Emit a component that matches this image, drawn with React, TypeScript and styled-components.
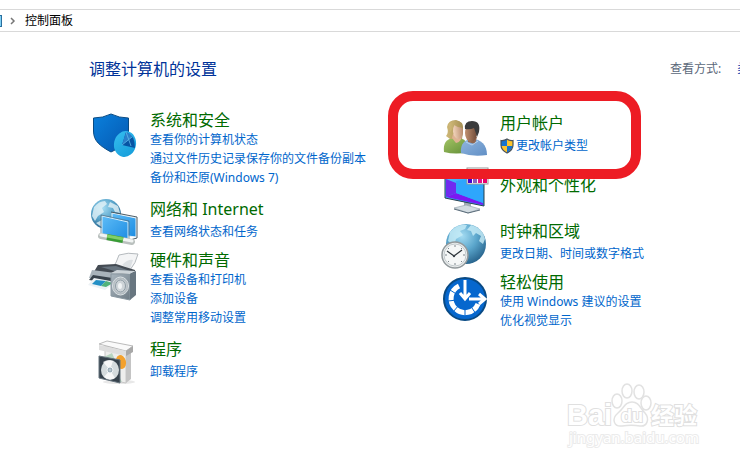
import React from "react";
import styled, { createGlobalStyle } from "styled-components";

const GlobalStyle = createGlobalStyle`
  * { box-sizing: border-box; }
  body {
    margin: 0;
    background: #fff;
    font-family: "Noto Sans", "Noto Sans CJK SC", sans-serif;
    font-size: 12px;
    overflow: hidden;
  }
`;

const Page = styled.div`
  position: relative;
  min-height: 100vh;
  padding-top: 9px;
  overflow: hidden;
`;

const AddressBar = styled.nav`
  display: flex;
  align-items: center;
  height: 23px;
  border-top: 1px solid #d9d9d9;
  border-bottom: 1px solid #d9d9d9;
`;

const LocationEdge = styled.span`
  width: 2px;
  height: 12px;
  background: #7fd0f5;
  border: solid #2a6f9e;
  border-width: 1px 1px 1px 0;
`;

const Chevron = styled.svg`
  width: 6px;
  height: 8px;
  margin: 0 9px 0 8px;
`;

const Crumb = styled.a`
  color: #000;
  line-height: 20px;
  text-decoration: none;
`;

const Header = styled.header`
  display: flex;
  align-items: center;
  justify-content: space-between;
  padding-left: 89px;
  margin-top: 24px;
  height: 26px;
`;

const Heading = styled.h1`
  margin: 0;
  font-size: 16px;
  font-weight: 400;
  line-height: 26px;
  color: #003399;
`;

const ViewMode = styled.div`
  display: flex;
  flex: 0 0 70px;
  gap: 16px;
  overflow: hidden;
  white-space: nowrap;
  line-height: 20px;
  color: #5a6779;
`;

const ViewButton = styled.button`
  flex: none;
  padding: 0;
  border: 0;
  background: none;
  font: inherit;
  color: #0033aa;
`;

const Categories = styled.main`
  display: grid;
  grid-template-columns: 7fr 6fr;
  align-items: start;
  margin-top: 28px;
  padding: 0 2px 0 88px;
`;

const Column = styled.div<{ $top?: number }>`
  padding-top: ${(p) => p.$top ?? 0}px;
`;

const Entry = styled.section<{ $single?: boolean; $featured?: boolean }>`
  position: relative;
  display: grid;
  grid-template-columns: 50px 1fr;
  column-gap: 12px;
  min-height: 46px;
  padding-bottom: ${(p) => (p.$single ? 9 : 12)}px;
  margin-bottom: ${(p) => (p.$featured ? 11 : 0)}px;
`;

const Icon = styled.svg`
  width: 50px;
  height: 50px;
  margin-bottom: -24px;
  overflow: visible;
`;

const Title = styled.a`
  display: block;
  font-size: 16px;
  line-height: 20px;
  color: #006a00;
  text-decoration: none;
  white-space: nowrap;
`;

const Links = styled.ul<{ $single?: boolean }>`
  list-style: none;
  margin: ${(p) => (p.$single ? 3 : 0)}px 0 0;
  padding: 0;
`;

const LinkRow = styled.li`
  display: flex;
  align-items: center;
  gap: 2px;
  height: 19px;
`;

const TaskLink = styled.a`
  line-height: 19px;
  color: #0066cc;
  text-decoration: none;
  white-space: nowrap;
`;

const ShieldSvg = styled.svg`
  width: 14px;
  height: 16px;
`;

const Highlight = styled.div`
  position: absolute;
  z-index: 2;
  left: -50px;
  top: -22px;
  width: 253px;
  height: 88px;
  border: 10px solid #ed1c24;
  border-radius: 25px;
  pointer-events: none;
`;

const Watermark = styled.svg`
  position: absolute;
  right: 38px;
  bottom: 12px;
  width: 138px;
  height: 70px;
  pointer-events: none;
`;

const SecurityIcon = () => (
  <Icon viewBox="0 0 50 50" aria-hidden="true">
    <defs>
      <linearGradient id="shield" x1="0" y1="0" x2="1" y2="1">
        <stop offset="0" stopColor="#0a80dc" />
        <stop offset="1" stopColor="#0557b0" />
      </linearGradient>
      <linearGradient id="pie" x1="0" y1="0" x2="1" y2="1">
        <stop offset="0" stopColor="#36bdf0" />
        <stop offset="1" stopColor="#139bd8" />
      </linearGradient>
    </defs>
    <path d="M5.500 8 Q15 8 23 4 Q31 8 40.500 8 V23 C40.500 31 34 37 23 42 C12 36 5.500 31 5.500 21Z" fill="url(#shield)" stroke="#084a83" />
    <ellipse cx="37" cy="34" rx="11" ry="13" transform="rotate(12 37 34)" fill="url(#pie)" />
    <path d="M34 35 L38 22 Q47 25 47 38Z" fill="#0754a4" />
    <path d="M34 35 L38 22 Q42 23 44 27Z" fill="#2b7fcb" />
    <path d="M38 22 L43 36 M34 35 L44 27" stroke="#5ebae8" strokeWidth=".8" />
  </Icon>
);

const GlobeDefs = ({ id }: { id: string }) => (
  <defs>
    <radialGradient id={id} cx="40%" cy="30%" r="75%">
      <stop offset="0" stopColor="#a5dcf2" />
      <stop offset=".5" stopColor="#5ba6cc" />
      <stop offset="1" stopColor="#245f88" />
    </radialGradient>
  </defs>
);

const NetworkIcon = () => (
  <Icon viewBox="0 0 50 50" aria-hidden="true">
    <GlobeDefs id="globeA" />
    <defs>
      <linearGradient id="screen" x1="0" y1="0" x2="1" y2="1">
        <stop offset="0" stopColor="#5ebcf7" />
        <stop offset="1" stopColor="#1c8ce2" />
      </linearGradient>
    </defs>
    <circle cx="18" cy="15" r="15" fill="url(#globeA)" />
    <path d="M6 8 Q11 2 17 2 L19 5 L14 9 L16 13 L10 17 L7 22 L4 17Z M22 3 L30 7 L32 14 L27 13 L25 9 L20 8Z M8 24 L14 21 L17 26 L15 29Z" fill="#e3f3f8" opacity=".8" />
    <path d="M24 14 L48 19 V38 L24 35Z" fill="url(#screen)" stroke="#e9f2f7" />
    <path d="M23 13 L49 18 V39 L42 41" fill="none" stroke="#4b5b65" />
    <path d="M14 17 L40 23 V42 L14 36Z" fill="url(#screen)" stroke="#d6effc" />
    <path d="M13 16 L41 22 V43 L13 37Z" fill="none" stroke="#526d80" strokeWidth=".7" />
    <path d="M13 37 L44 43" stroke="#bac0be" strokeWidth="6" strokeLinecap="round" />
    <path d="M13 36 L44 42" stroke="#f1f4f3" strokeWidth="3" strokeLinecap="round" />
    <path d="M19 38 L35 41" stroke="#389d35" strokeWidth="6" />
    <path d="M19 37 L35 40" stroke="#82cf68" strokeWidth="3" />
  </Icon>
);

const HardwareIcon = () => (
  <Icon viewBox="0 0 50 50" aria-hidden="true">
    <defs>
      <linearGradient id="metal" x1="0" y1="0" x2="1" y2="1">
        <stop offset="0" stopColor="#a9b5be" />
        <stop offset="1" stopColor="#6e7b85" />
      </linearGradient>
      <radialGradient id="cone">
        <stop offset="0" stopColor="#87919a" />
        <stop offset=".45" stopColor="#e3e6e8" />
        <stop offset="1" stopColor="#a3adb4" />
      </radialGradient>
    </defs>
    <path d="M31 5 Q40 2 50 4 Q48 13 42 20 L24 19 Q29 12 31 5Z" fill="#f4f5f6" stroke="#b5babe" />
    <path d="M34 15 Q40 9 45 10 L42 19Z" fill="#dce0e3" />
    <path d="M10 15 L28 14 L47 20 L48 27 L33 30 L4 25Z" fill="#444b53" />
    <path d="M13 17 L28 16 L42 21 L33 23Z" fill="#697580" />
    <path d="M4 20 L35 24 L32 33 L1 28Z" fill="#a9b3ba" />
    <path d="M5 25 L31 29 L27 34 L1 30Z" fill="#39434c" />
    <path d="M6 28 L28 32 L17 40 L0 35Z" fill="#edf2f5" />
    <path d="M8 30 L18 31 L13 36 L4 34Z" fill="#238fc5" />
    <path d="M18 31 L25 33 L18 37 L13 36Z" fill="#51b27a" />
    <path d="M23 24 L42 24 V50 L23 46Z" fill="url(#metal)" stroke="#8997a1" />
    <path d="M23 23 L29 20 L48 21 L42 24Z" fill="#ccd3d8" />
    <path d="M42 24 L48 21 V45 L42 50Z" fill="#687680" />
    <ellipse cx="32.500" cy="36" rx="8" ry="9" fill="url(#cone)" stroke="#dce2e5" />
    <ellipse cx="32.500" cy="36" rx="5" ry="6" fill="#ced4d8" stroke="#8e9ca5" />
    <ellipse cx="32" cy="36" rx="2" ry="3" fill="#f1f4f5" />
  </Icon>
);

const ProgramsIcon = () => (
  <Icon viewBox="0 0 50 50" aria-hidden="true">
    <ellipse cx="31" cy="43" rx="16" ry="2" fill="#e8e8e8" />
    <path d="M17 7 L38 11 V44 L17 40Z" fill="#eeeeed" stroke="#c8c8c8" />
    <path d="M38 11 L43 8 V40 L38 44Z" fill="#c4c4c4" />
    <path d="M11 5 L19 2 L45 7 L38 12Z" fill="#fafafa" stroke="#bbb" />
    <path d="M11 6 L38 12 V17 L11 11Z" fill="#dedede" />
    <path d="M38 12 L45 7 V13 L38 17Z" fill="#a8a8a8" />
    <path d="M16 18 L24 14 L28 23 L18 25Z M29 33 L34 43 L24 41Z" fill="#b8d5c1" />
    <ellipse cx="33" cy="23" rx="5" ry="7" transform="rotate(-15 33 23)" fill="#f3a12d" />
    <path d="M11 17 L32 21 V44 L11 39Z" fill="#36424c" stroke="#66747e" />
    <ellipse cx="22" cy="31" rx="9" ry="10" fill="#d4dbdd" />
    <path d="M22 31 L15 23 Q19 20 25 22Z M22 31 L27 39 Q21 42 16 38Z" fill="#fff" opacity=".8" />
    <ellipse cx="22" cy="31" rx="3" ry="3" fill="#9eb0ba" stroke="#f1f5f7" />
    <circle cx="22" cy="31" r="1" fill="#c4d0d6" />
  </Icon>
);

const UsersIcon = () => (
  <Icon viewBox="0 0 50 50" aria-hidden="true">
    <defs>
      <linearGradient id="green" x2="1" y2="1">
        <stop stopColor="#a4c565" />
        <stop offset="1" stopColor="#608c35" />
      </linearGradient>
      <linearGradient id="blue" x2="1" y2="1">
        <stop stopColor="#91b6df" />
        <stop offset="1" stopColor="#618fc5" />
      </linearGradient>
      <linearGradient id="hair">
        <stop stopColor="#d0b978" />
        <stop offset="1" stopColor="#a58f54" />
      </linearGradient>
      <linearGradient id="faceA">
        <stop stopColor="#f3d6bd" />
        <stop offset="1" stopColor="#ba8d70" />
      </linearGradient>
      <linearGradient id="faceB">
        <stop stopColor="#c19170" />
        <stop offset="1" stopColor="#704b39" />
      </linearGradient>
    </defs>
    <path d="M6 39 C5 30 8 26 16 25 C26 24 31 29 31 39 Q18 42 6 39Z" fill="url(#green)" />
    <path d="M12 26 L8 23 Q11 20 9 14 Q10 7 18 7 Q26 8 25 19 L24 26Z" fill="url(#hair)" />
    <path d="M15 21 L24 23 Q23 29 18 30 L14 25Z" fill="#dfb393" />
    <ellipse cx="20" cy="18" rx="5" ry="8" transform="rotate(-5 20 18)" fill="url(#faceA)" />
    <path d="M12 19 Q15 16 16 12 Q20 15 25 15 L24 10 Q16 5 11 11Z" fill="url(#hair)" />
    <path d="M23 40 C22 31 27 26 34 26 C43 26 49 32 49 42 Q34 44 23 40Z" fill="url(#blue)" />
    <path d="M30 23 L39 24 L37 31 L30 29Z" fill="#91664e" />
    <ellipse cx="33" cy="20" rx="6" ry="9" fill="url(#faceB)" />
    <path d="M27 16 Q26 8 34 8 Q43 8 41 19 L39 24 Q38 20 36 15 Q32 17 27 16Z" fill="#3b3b3c" />
    <path d="M28 29 L34 32 L40 28" fill="none" stroke="#b9d3ee" />
  </Icon>
);

const AppearanceIcon = () => (
  <Icon viewBox="0 0 50 50" aria-hidden="true">
    <defs>
      <linearGradient id="monitor" x2="1" y2="1">
        <stop stopColor="#50bbff" />
        <stop offset="1" stopColor="#1698f0" />
      </linearGradient>
    </defs>
    <path d="M26 27 H33 V34 H26Z" fill="#a2adb5" />
    <path d="M16 33 L28 30 L42 34 L30 38Z" fill="#d3dce2" stroke="#9ba7b1" strokeWidth=".7" />
    <path d="M16 34 L30 38 L42 35" fill="none" stroke="#596b79" />
    <path d="M7 -1 L46 2 V31 L7 23Z" fill="url(#monitor)" stroke="#2a4251" />
    <path d="M8 4 L18 8 V18 L8 22Z" fill="#702bf0" />
    <path d="M8 22 L18 18 L45 28 V30Z" fill="#7b18f1" />
    <path d="M18 6 V18 L45 28 V2Z" fill="#2ea6fc" />
    <rect x="29" y="-7" width="21" height="16" fill="#fff" stroke="#989898" />
    <path d="M30 -2 H34 V8 H30Z" fill="#4a00d0" />
    <path d="M35 -2 H39 V8 H35Z" fill="#8c60bd" />
    <path d="M40 -2 H44 V8 H40Z" fill="#e31189" />
    <path d="M45 -2 H49 V8 H45Z" fill="#eb006b" />
  </Icon>
);

const ClockIcon = () => (
  <Icon viewBox="0 0 50 50" aria-hidden="true">
    <GlobeDefs id="globeB" />
    <circle cx="28" cy="23" r="20" fill="url(#globeB)" />
    <path d="M12 11 Q20 2 29 4 L27 8 L22 10 L25 14 L18 18 L16 25 L10 20Z M33 4 Q45 7 47 18 L45 23 L41 20 L43 15 L38 12 L35 15 L33 10 L29 9Z" fill="#c9edf7" opacity=".8" />
    <circle cx="17" cy="34" r="13" fill="#edf0f0" stroke="#92999c" strokeWidth="1.500" />
    <circle cx="17" cy="34" r="11" fill="#f5f7f7" stroke="#c2c9cc" />
    <path d="M17 24 V26 M17 42 V44 M7 34 H9 M25 34 H27 M10 27 L11 28 M23 40 L24 41 M24 27 L23 28 M11 40 L10 41" stroke="#7c868c" />
    <path d="M9 30 L16 35 L24 29" fill="none" stroke="#2c3338" strokeWidth="1.200" />
    <circle cx="16" cy="35" r="1.200" fill="#384047" />
  </Icon>
);

const EaseIcon = () => (
  <Icon viewBox="0 0 50 50" aria-hidden="true">
    <circle cx="27" cy="27" r="21" fill="#0667ce" stroke="#094a84" strokeWidth="2" />
    <path d="M21 14 A14 14 0 1 0 40 32" fill="none" stroke="#fff" strokeWidth="5" />
    <path d="M12 18 L20 23 M10 29 L19 28 M15 40 L21 33 M27 35 V45 M32 33 L38 42" stroke="#0667ce" strokeWidth="1" />
    <path d="M27 27 V9" stroke="#0667ce" strokeWidth="7" />
    <path d="M27 8 V26 M22 21 L27 27 L32 21" fill="none" stroke="#fff" strokeWidth="3" />
    <path d="M31 27 H46 M41 22 L47 27 L41 32" fill="none" stroke="#fff" strokeWidth="3" />
  </Icon>
);

const AdminShield = () => (
  <ShieldSvg viewBox="0 0 14 16" aria-hidden="true">
    <path d="M1 2 Q4 3 7 1 V8 H1Z" fill="#1674cf" />
    <path d="M7 1 Q10 3 13 2 V8 H7Z" fill="#ffc42b" />
    <path d="M1 8 H7 V15 Q2 12 1 8Z" fill="#ffc42b" />
    <path d="M7 8 H13 Q12 12 7 15Z" fill="#1674cf" />
    <path d="M1 2.500 Q4 3 7 1 Q10 3 13 2.500 V7 Q13 12 7 15 Q1 12 1 7Z" fill="none" stroke="#47515a" strokeWidth="1.200" />
  </ShieldSvg>
);

type Item = {
  title: string;
  icon: React.ReactNode;
  links: string[];
  admin?: boolean;
};

const left: Item[] = [
  { title: "系统和安全", icon: <SecurityIcon />, links: ["查看你的计算机状态", "通过文件历史记录保存你的文件备份副本", "备份和还原(Windows 7)"] },
  { title: "网络和 Internet", icon: <NetworkIcon />, links: ["查看网络状态和任务"] },
  { title: "硬件和声音", icon: <HardwareIcon />, links: ["查看设备和打印机", "添加设备", "调整常用移动设置"] },
  { title: "程序", icon: <ProgramsIcon />, links: ["卸载程序"] },
];

const right: Item[] = [
  { title: "用户帐户", icon: <UsersIcon />, links: ["更改帐户类型"], admin: true },
  { title: "外观和个性化", icon: <AppearanceIcon />, links: [] },
  { title: "时钟和区域", icon: <ClockIcon />, links: ["更改日期、时间或数字格式"] },
  { title: "轻松使用", icon: <EaseIcon />, links: ["使用 Windows 建议的设置", "优化视觉显示"] },
];

const Category = ({ item }: { item: Item }) => {
  const single = item.links.length === 1;
  return (
    <Entry $single={single} $featured={item.admin}>
      {item.icon}
      <div>
        <Title href="#">{item.title}</Title>
        {item.links.length > 0 && (
          <Links $single={single}>
            {item.links.map((text) => (
              <LinkRow key={text}>
                {item.admin && <AdminShield />}
                <TaskLink href="#">{text}</TaskLink>
              </LinkRow>
            ))}
          </Links>
        )}
      </div>
      {item.admin && <Highlight />}
    </Entry>
  );
};

export default function App() {
  return (
    <Page>
      <GlobalStyle />
      <AddressBar>
        <LocationEdge />
        <Chevron viewBox="0 0 6 8" aria-hidden="true">
          <path d="M1 1 L4 4 L1 7" fill="none" stroke="#777" strokeWidth="1.500" />
        </Chevron>
        <Crumb href="#">控制面板</Crumb>
      </AddressBar>
      <Header>
        <Heading>调整计算机的设置</Heading>
        <ViewMode>
          <span>查看方式:</span>
          <ViewButton type="button">类别</ViewButton>
        </ViewMode>
      </Header>
      <Categories>
        <Column>
          {left.map((item) => <Category key={item.title} item={item} />)}
        </Column>
        <Column $top={3}>
          {right.map((item) => <Category key={item.title} item={item} />)}
        </Column>
      </Categories>
      <Watermark viewBox="0 0 138 70">
        <g fill="#fff" stroke="#e2e2e2" strokeWidth="1.500">
          <ellipse cx="53" cy="19" rx="5" ry="7" />
          <ellipse cx="63" cy="9" rx="5" ry="7" />
          <ellipse cx="75" cy="10" rx="5" ry="7" />
          <ellipse cx="82" cy="21" rx="5" ry="7" />
          <path d="M68 20 C61 20 60 26 54 31 C47 37 50 45 58 44 C65 43 70 43 76 44 C83 45 86 37 81 31 C76 26 75 20 68 20Z" />
        </g>
        <g fill="#fff" stroke="#e0e0e0" strokeWidth="2" paintOrder="stroke" fontFamily='"Liberation Sans", "Noto Sans CJK SC", sans-serif' fontWeight="700">
          <text x="3" y="43" fontSize="29">Bai</text>
          <text x="57" y="40" fontSize="18">du</text>
          <text x="87" y="42" fontSize="23">经验</text>
        </g>
        <text x="5" y="61" fontSize="15" fill="#fff" stroke="#ebebeb" strokeWidth="2" paintOrder="stroke" fontFamily='"Noto Sans", sans-serif'>jingyan.baidu.com</text>
      </Watermark>
    </Page>
  );
}
